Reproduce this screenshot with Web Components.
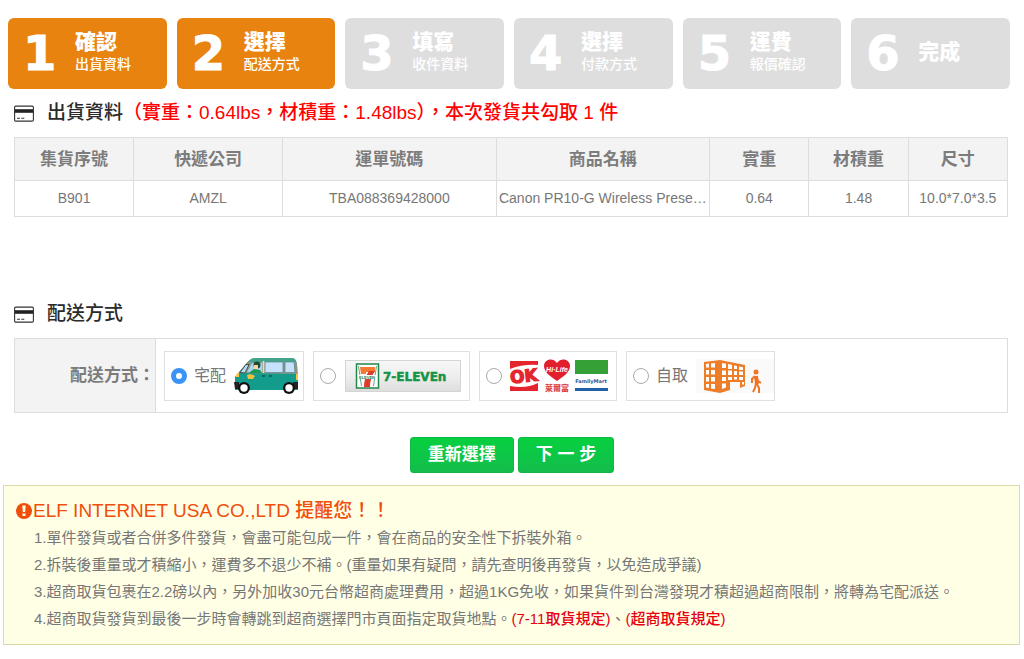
<!DOCTYPE html>
<html lang="zh-Hant">
<head>
<meta charset="utf-8">
<meta name="viewport" content="width=device-width, initial-scale=1">
<title>配送方式</title>
<style>
  body { margin: 0; background: #fff; color: #777; font-family: "Liberation Sans", "Noto Sans CJK TC", sans-serif; font-size: 14px; }
</style>
</head>
<body>
<shipping-page></shipping-page>

<script>
const define = (name, html, setup) => {
  const template = document.createElement('template');
  template.innerHTML = html;
  customElements.define(name, class extends HTMLElement {
    constructor() {
      super();
      this.attachShadow({ mode: 'open' }).append(template.content.cloneNode(true));
    }
    connectedCallback() { if (setup) setup(this, this.shadowRoot); }
  });
};

define('step-bar', `
  <style>
    :host { display: grid; grid-template-columns: repeat(6, 1fr); gap: 10px; padding: 18px 14px 0 8px; }
  </style>
  <slot></slot>`);

define('step-item', `
  <style>
    :host { display: flex; align-items: center; box-sizing: border-box; min-height: 71px; padding: 0 0 2px 15px; border-radius: 6px; background: #dedede; color: #fff; }
    :host([done]) { background: #e98310; }
    .number { width: 52px; font: bold 48px/56px "DejaVu Sans", sans-serif; -webkit-text-stroke: 1px #fff; }
    .text { display: grid; padding-bottom: 2px; }
    .title { font-size: 21px; line-height: 25px; font-weight: 900; }
    .detail { font-size: 14px; line-height: 20px; font-weight: 500; }
    .detail:empty { display: none; }
  </style>
  <span class="number"></span>
  <span class="text"><span class="title"><slot></slot></span><span class="detail"></span></span>`,
  (host, root) => {
    root.querySelector('.number').textContent = host.getAttribute('number');
    root.querySelector('.detail').textContent = host.getAttribute('detail') || '';
  });

define('section-heading', `
  <style>
    :host { display: block; padding: 0 14px; }
    h2 { display: flex; align-items: center; gap: 13px; min-height: 48px; margin: 0; color: #2b2b2b; font-size: 19px; line-height: 26px; font-weight: 500; }
    svg { flex: none; }
    ::slotted(em) { color: #f00; font-style: normal; }
  </style>
  <h2>
    <svg width="20" height="17" viewBox="0 0 20 17" aria-hidden="true">
      <rect x=".6" y="1.1" width="18.8" height="15" rx="1.2" fill="#fff" stroke="#333" stroke-width="1.1"/>
      <path d="M1 4.200h18v3.600H1z" fill="#222"/>
      <path d="M3 13.300h3M7.300 13.300h3" stroke="#333" stroke-width="1.1"/>
    </svg>
    <span><slot></slot></span>
  </h2>`);

define('parcel-table', `
  <style>
    :host { display: block; padding: 0 16px 0 14px; }
    table { width: 100%; table-layout: fixed; border-collapse: collapse; }
    th, td { box-sizing: border-box; padding: 0 1px 1px; border: 1px solid #ddd; text-align: center; overflow: hidden; white-space: nowrap; text-overflow: ellipsis; }
    th { height: 43px; padding-bottom: 4px; background: #f3f3f3; font-size: 17px; font-weight: bold; color: #7c7c7c; }
    td { height: 36px; font-size: 14px; }
    .s { width: 10%; } .m { width: 12%; } .l { width: 15%; }
  </style>
  <table>
    <thead><tr>
      <th class="m" scope="col">集貨序號</th><th class="l" scope="col">快遞公司</th><th scope="col">運單號碼</th><th scope="col">商品名稱</th>
      <th class="s" scope="col">實重</th><th class="s" scope="col">材積重</th><th class="s" scope="col">尺寸</th>
    </tr></thead>
    <tbody><tr>
      <td>B901</td><td>AMZL</td><td>TBA088369428000</td><td>Canon PR10-G Wireless Prese…</td><td>0.64</td><td>1.48</td><td>10.0*7.0*3.5</td>
    </tr></tbody>
  </table>`);

define('delivery-picker', `
  <style>
    :host { display: block; padding: 0 16px 0 14px; }
    fieldset { display: grid; grid-template-columns: 141px 1fr; min-width: 0; margin: 0; padding: 0; border: 1px solid #ddd; }
    .name { display: flex; align-items: center; justify-content: flex-end; box-sizing: border-box; min-height: 73px; padding-bottom: 4px; background: #f3f3f3; border-right: 1px solid #ddd; font-size: 17px; font-weight: bold; color: #7c7c7c; }
    .choices { display: flex; flex-wrap: wrap; align-items: center; gap: 9px; padding: 11px 8px; }
    label { display: flex; align-items: center; box-sizing: border-box; height: 50px; padding: 0 5px 0 6px; border: 1px solid #e0e0e0; font-size: 16px; }
    label.plate { padding-right: 8px; }
    label.flush { padding-right: 0; }
    label span { padding: 0 8px 4px 0; }
    input { appearance: none; flex: none; box-sizing: border-box; width: 16px; height: 16px; margin: 0 7px 0 0; border: 1px solid #aaa; border-radius: 50%; background: #fff; }
    input:checked { border: 5px solid #3b93f5; }
    .plate input { margin-right: 9px; }
    svg { display: block; }
  </style>
  <fieldset aria-label="配送方式">
    <div class="name">配送方式：</div>
    <div class="choices">
      <label><input type="radio" name="method" value="home" checked><span>宅配</span>
        <svg width="64" height="38" viewBox="0 0 64 38" aria-hidden="true">
          <path d="M1 33V20l4-5 6-7q4-6 9-6h38q4 0 5 5l1 19v7z" fill="#139b8b"/>
          <path d="M5 16l6-8q4-6 9-6h38q4 0 5 5l.5 10L64 17z" fill="#8a9586"/>
          <path d="M20 1h38q4 0 4 4H14q3-4 6-4" fill="#43a48c"/>
          <path d="M6 15.500l6-8h3l-4 8.500z" fill="#b9dcf5" stroke="#333" stroke-width=".8"/>
          <path d="M13 15l5-9h10v9z" fill="#a7d5ef"/>
          <path d="M31 5v10.500h18V5zM51 5v10.500h10L60 5z" fill="#c5e1fb" stroke="#638c91" stroke-width=".8"/>
          <path d="M29.500 4v12" stroke="#d9dfcf" stroke-width="1.700"/>
          <circle cx="23" cy="8" r="3.500" fill="#174b34"/><path d="M20 8h4v4h-4z" fill="#ffd0a5"/>
          <path d="M16 15l4-3 6 1 2 3H16z" fill="#1b9851"/>
          <path d="M13 18q4-2 8 1l-2 3h-5z" fill="#f0c33d"/>
          <path d="M28 19h3M35 19h3" stroke="#0a5854" stroke-width="1.500"/>
          <path d="M2 18l3-3v5H2zM62 17h2v6h-2z" fill="#fac546"/>
          <path d="M0 25h5v7H1zM59 25h5v7h-5z" fill="#222"/>
          <circle cx="10" cy="31" r="6" fill="#111"/><circle cx="10" cy="31" r="3.700" fill="#fff"/>
          <circle cx="55" cy="31" r="6" fill="#111"/><circle cx="55" cy="31" r="3.700" fill="#fff"/>
        </svg>
      </label>
      <label class="plate"><input type="radio" name="method" value="seven" aria-label="7-ELEVEN">
        <svg width="116" height="34" viewBox="0 0 116 34">
          <defs><linearGradient id="plate" x2="0" y2="1"><stop stop-color="#f7f7f7"/><stop offset=".5" stop-color="#eee"/><stop offset="1" stop-color="#ddd"/></linearGradient></defs>
          <rect x=".5" y="1.500" width="115" height="31" fill="url(#plate)" stroke="#d5d5d5"/>
          <rect x="11.500" y="5" width="22" height="24" fill="#fff" stroke="#20864c" stroke-width="1.500"/>
          <path d="M13.500 7l3 20M31.500 7l-3 20" stroke="#20864c" stroke-width=".7"/>
          <path d="M15 8h15v5h-9v2h-5z" fill="#f47a32"/><path d="M24 12h6q-5 7-5 16h-6q0-9 5-16" fill="#dd3b2b"/>
          <path d="M13 16h19v4H13z" fill="#fff"/>
          <text x="14" y="20" font-family="Liberation Sans" font-weight="bold" font-size="4" fill="#16834a">ELEVEN</text>
          <text x="38" y="22" font-family="DejaVu Sans" font-weight="bold" font-size="12" fill="#149447" stroke="#149447" stroke-width=".5">7-ELEVEn</text>
        </svg>
      </label>
      <label><input type="radio" name="method" value="store" aria-label="OK Hi-Life FamilyMart">
        <svg width="102" height="36" viewBox="3 0 102 36">
          <path d="M4 3h28v4Q17 6 4 11zM4 33h28V25Q20 31 4 28z" fill="#e5252d"/>
          <text x="4" y="24" transform="rotate(-6 18 18)" font-family="DejaVu Sans" font-weight="bold" font-size="17" fill="#e5252d" stroke="#e5252d" stroke-width="1.200">OK</text>
          <path d="M51 23C42 17 38 13 38 8c0-7 9-9 13-3 4-6 13-4 13 3 0 5-4 9-13 15" fill="#e2202d"/>
          <text x="51" y="14" text-anchor="middle" font-family="Liberation Sans" font-weight="bold" font-style="italic" font-size="7" fill="#fff">Hi·Life</text>
          <text x="51" y="33" text-anchor="middle" font-family="Noto Sans CJK TC" font-weight="bold" font-size="8" fill="#d93640">萊爾富</text>
          <path d="M69 2h33v14H69z" fill="#35a036"/>
          <text x="85" y="25" text-anchor="middle" font-family="DejaVu Sans" font-weight="bold" font-size="5" fill="#255a9d">FamilyMart</text>
          <path d="M69 30h33v3H69z" fill="#255fa5"/>
        </svg>
      </label>
      <label class="flush"><input type="radio" name="method" value="pickup"><span>自取</span>
        <svg width="78" height="36" viewBox="0 0 78 36" aria-hidden="true">
          <path d="M0 1h78v34H0z" fill="#fafafa"/>
          <path d="M8 4l16-2 25 5v21l-5 2v-6H34v8l-10 3-16-3z" fill="#ee7d28"/>
          <g fill="#fff">
            <path d="M10 6l3-.5v4H10zM15 5.500l4-.5v4.500h-4zM10 12h3v4.500h-3zM15 12h4v4.500h-4zM10 19h3v4.500h-3zM15 19h4v4.500h-4zM10 26h3v4l-3-.500zM15 26h4v5l-4-.500z"/>
            <path d="M26 5l4 .800V10h-4zM32 6l4 .800V11h-4zM38 7.500l3 .500v3h-3zM43 8.500l4 .700V12h-4zM26 12.500h4V17h-4zM32 12.500h4V17h-4zM38 13h3v4h-3zM43 13.500h4V17h-4zM26 19h4v4h-4zM32 19h4v3h-4zM38 19h3v2.500h-3zM43 19h4v3h-4zM26 25.500h4v4l-4 1.500zM46 24h2v2.500h-2z"/>
          </g>
          <circle cx="60" cy="14" r="2.500" fill="#ee7427"/>
          <path d="M60 18l1 8" stroke="#ee7427" stroke-width="4"/>
          <path d="M59 18l-3 3v4M60 19l2 4 3 2M60 25l-1 5-2 4M61 26l2 4v5" fill="none" stroke="#ee7427" stroke-width="2"/>
        </svg>
      </label>
    </div>
  </fieldset>`);

define('action-button', `
  <style>
    :host { display: block; }
    button { display: block; height: 36px; padding: 0 17px; border: 1px solid #12b845; border-radius: 3px; background: linear-gradient(#06d03f, #14bd4c); color: #fff; font: bold 17px/24px "Liberation Sans", "Noto Sans CJK TC", sans-serif; }
  </style>
  <button type="button"><slot></slot></button>`);

define('notice-box', `
  <style>
    :host { display: block; margin: 12px 4px 14px 3px; padding: 12px; border: 1px solid #dedbaa; background: #ffffe6; }
    h3 { display: flex; align-items: center; margin: 0; color: #f04e0c; font-size: 19px; line-height: 26px; font-weight: 500; }
    ol { margin: 0; padding: 0 0 0 18px; list-style: none; font-size: 15px; line-height: 27px; }
    ::slotted(li) { display: block; }
    svg { flex: none; margin-right: 1px; }
  </style>
  <h3>
    <svg width="16" height="16" viewBox="0 0 16 16" aria-hidden="true"><circle cx="8" cy="8" r="8" fill="#f04e0c"/><path d="M6.300 2.500h3.400L9.200 9H6.800zM6.500 10.500h3V13h-3z" fill="#ffffe6"/></svg>
    <slot name="title"></slot>
  </h3>
  <ol><slot></slot></ol>`);

define('shipping-page', `
  <style>
    :host { display: block; }
    .delivery { margin-top: 73px; }
    .actions { display: flex; justify-content: center; gap: 4px; margin-top: 24px; }
    a { color: #e60012; text-decoration: none; font-weight: 500; }
  </style>
  <step-bar>
    <step-item number="1" detail="出貨資料" done>確認</step-item>
    <step-item number="2" detail="配送方式" done>選擇</step-item>
    <step-item number="3" detail="收件資料">填寫</step-item>
    <step-item number="4" detail="付款方式">選擇</step-item>
    <step-item number="5" detail="報價確認">運費</step-item>
    <step-item number="6">完成</step-item>
  </step-bar>
  <section-heading>出貨資料<em>（實重：0.64lbs，材積重：1.48lbs），本次發貨共勾取 1 件</em></section-heading>
  <parcel-table></parcel-table>
  <section-heading class="delivery">配送方式</section-heading>
  <delivery-picker></delivery-picker>
  <div class="actions"><action-button>重新選擇</action-button><action-button>下 一 步</action-button></div>
  <notice-box>
    <span slot="title">ELF INTERNET USA CO.,LTD 提醒您！！</span>
    <li>1.單件發貨或者合併多件發貨，會盡可能包成一件，會在商品的安全性下拆裝外箱。</li>
    <li>2.拆裝後重量或才積縮小，運費多不退少不補。(重量如果有疑問，請先查明後再發貨，以免造成爭議)</li>
    <li>3.超商取貨包裹在2.2磅以內，另外加收30元台幣超商處理費用，超過1KG免收，如果貨件到台灣發現才積超過超商限制，將轉為宅配派送。</li>
    <li>4.超商取貨發貨到最後一步時會轉跳到超商選擇門市頁面指定取貨地點。<a href="#seven">(7-11取貨規定)</a>、<a href="#store">(超商取貨規定)</a></li>
  </notice-box>`);
</script>
</body>
</html>
